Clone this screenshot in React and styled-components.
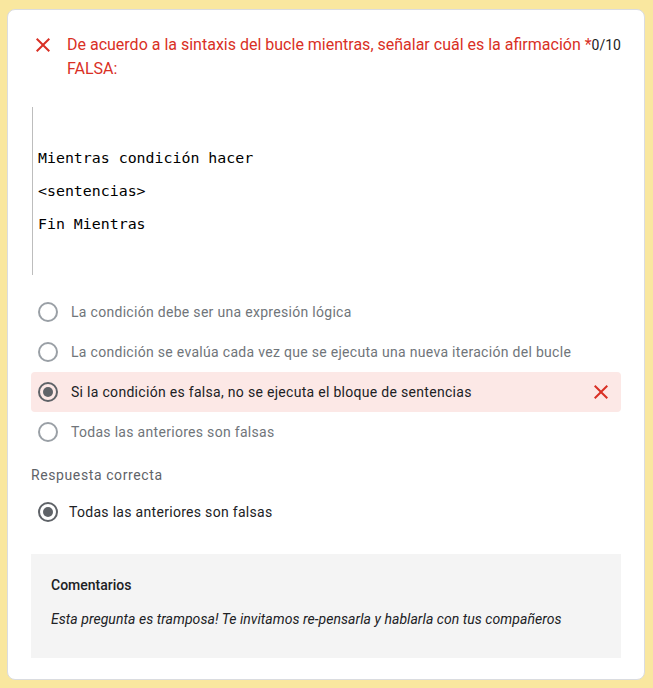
import React from 'react';
import styled, { createGlobalStyle } from 'styled-components';

const GlobalStyle = createGlobalStyle`
	body {
		margin: 0;
		background: #f9e79f;
		font-family: Roboto, "Liberation Sans", Arial, sans-serif;
	}
`;

const Page = styled.div`
	padding: 9px 8px 8px 7px;
`;

const Card = styled.div`
	width: 638px;
	box-sizing: border-box;
	background: #fff;
	border: 1px solid #dadce0;
	border-radius: 8px;
	padding: 23px 23px 21px 23px;
`;

const Header = styled.div`
	display: flex;
	align-items: flex-start;
`;

const HeaderIcon = styled.div`
	flex: 0 0 24px;
	height: 24px;
	margin-right: 12px;
	color: #d93025;
`;

const Title = styled.div`
	flex: 1;
	font-size: 16px;
	line-height: 24px;
	color: #d93025;
	white-space: nowrap;
`;

const Score = styled.div`
	flex: none;
	font-size: 14px;
	line-height: 24px;
	color: #202124;
`;

const Code = styled.div`
	margin: 26px 0 17px 1px;
	border-left: 1px solid #bdbdbd;
	padding: 35px 0 34px 5px;
	font-family: "DejaVu Sans Mono", "Liberation Mono", monospace;
	font-size: 14.9px;
	line-height: 33px;
	color: #000;
`;

const Options = styled.div`
	display: flex;
	flex-direction: column;
	margin-top: ${p => p.$top || 0}px;
`;

const Option = styled.div`
	display: flex;
	align-items: center;
	height: 40px;
	padding: 0 8px 0 7px;
	border-radius: 4px;
	background: ${p => (p.$wrong ? '#fce8e6' : 'transparent')};
	font-size: 14px;
	letter-spacing: 0.3px;
	color: ${p => (p.$checked ? '#202124' : '#70757a')};
`;

const Radio = styled.span`
	flex: none;
	width: 20px;
	height: 20px;
	box-sizing: border-box;
	border-radius: 50%;
	border: 2px solid ${p => (p.$checked ? '#5f6368' : '#9aa0a6')};
	display: flex;
	align-items: center;
	justify-content: center;
	margin-right: ${p => p.$gap || 13}px;

	&::after {
		content: '';
		display: ${p => (p.$checked ? 'block' : 'none')};
		width: 10px;
		height: 10px;
		border-radius: 50%;
		background: #5f6368;
	}
`;

const Label = styled.span`
	flex: 1;
`;

const MarkIcon = styled.div`
	flex: 0 0 24px;
	height: 24px;
	color: #d93025;
`;

const SectionLabel = styled.div`
	margin-top: 13px;
	font-size: 14px;
	line-height: 20px;
	letter-spacing: 0.6px;
	color: #5f6368;
`;

const Feedback = styled.div`
	margin-top: 22px;
	background: #f4f4f4;
	padding: 21px 20px 29px 20px;
	font-size: 14px;
	line-height: 20px;
	color: #202124;
`;

const FeedbackTitle = styled.div`
	font-weight: 500;
	margin-bottom: 14px;
`;

const FeedbackText = styled.div`
	font-style: italic;
	letter-spacing: 0.05px;
`;

const CloseIcon = () => (
	<svg width="24" height="24" viewBox="0 0 24 24" fill="currentColor">
		<path d="M19 6.41 17.59 5 12 10.59 6.41 5 5 6.41 10.59 12 5 17.59 6.41 19 12 13.41 17.59 19 19 17.59 13.41 12z" />
	</svg>
);

const options = [
	'La condición debe ser una expresión lógica',
	'La condición se evalúa cada vez que se ejecuta una nueva iteración del bucle',
	'Si la condición es falsa, no se ejecuta el bloque de sentencias',
	'Todas las anteriores son falsas',
];

const chosen = 2;

export default function App() {
	return (
		<Page>
			<GlobalStyle />
			<Card>
				<Header>
					<HeaderIcon><CloseIcon /></HeaderIcon>
					<Title>
						De acuerdo a la sintaxis del bucle mientras, señalar cuál es la afirmación *
						<br />
						FALSA:
					</Title>
					<Score>0/10</Score>
				</Header>
				<Code>
					<div>Mientras condición hacer</div>
					<div>&lt;sentencias&gt;</div>
					<div>Fin Mientras</div>
				</Code>
				<Options>
					{options.map((text, i) => (
						<Option key={i} $checked={i === chosen} $wrong={i === chosen}>
							<Radio $checked={i === chosen} />
							<Label>{text}</Label>
							{i === chosen && <MarkIcon><CloseIcon /></MarkIcon>}
						</Option>
					))}
				</Options>
				<SectionLabel>Respuesta correcta</SectionLabel>
				<Options $top={7}>
					<Option $checked>
						<Radio $checked $gap={11} />
						<Label>Todas las anteriores son falsas</Label>
					</Option>
				</Options>
				<Feedback>
					<FeedbackTitle>Comentarios</FeedbackTitle>
					<FeedbackText>Esta pregunta es tramposa! Te invitamos re-pensarla y hablarla con tus compañeros</FeedbackText>
				</Feedback>
			</Card>
		</Page>
	);
}
